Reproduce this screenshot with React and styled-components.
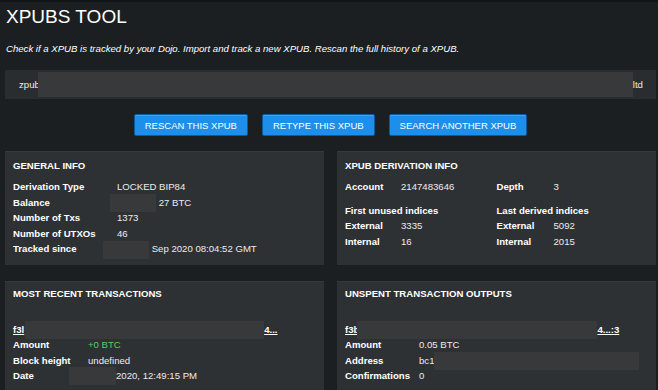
import styled, { createGlobalStyle } from 'styled-components';

const colors = {
    page: '#1c1f22',
    strip: '#121518',
    card: '#2e3134',
    cardEdge: '#373a3d',
    field: '#2a2d30',
    redact: '#38393a',
    blue: '#1d8ee9',
    blueEdge: '#0c5aa0',
    text: '#ffffff',
    value: '#ececec',
    green: '#62c95f'
}

const { page, strip, card, cardEdge, field, redact, blue, blueEdge, text, value, green } = colors;

const GlobalStyle = createGlobalStyle`
    html, body {
        margin: 0;
        background: ${page};
        overflow: hidden;
    }
    body {
        font-family: "Liberation Sans", Arial, sans-serif;
        color: ${text};
    }
`

const Page = styled.div`
    border-top: 2px solid ${strip};
    padding: 4px 2px 0 5px;
    height: 390px;
    box-sizing: border-box;
`

const Title = styled.h1`
    margin: 0 0 0 1px;
    font-size: 19px;
    line-height: 22px;
    font-weight: 400;
`

const Intro = styled.p`
    margin: 14px 0 0 1px;
    font-size: 9.6px;
    line-height: 14px;
    font-style: italic;
`

const Field = styled.div`
    margin-top: 14px;
    height: 29px;
    background: ${field};
    display: flex;
    align-items: center;
    padding-left: 14px;
    font-size: 9.6px;
    color: ${value};
`

const Redact = styled.span`
    display: inline-block;
    width: ${p => p.$w}px;
    height: ${p => p.$h || 18}px;
    margin: -2px 0 -2px ${p => p.$shift || 0}px;
    background: ${redact};
    vertical-align: middle;
`

const Actions = styled.div`
    margin-top: 15px;
    display: flex;
    justify-content: center;
    gap: 14px;
`

const Button = styled.button`
    height: 22px;
    padding: 0 10px;
    background: ${blue};
    border: 1px solid ${blueEdge};
    border-radius: 2px;
    box-shadow: inset 0 1px 0 rgba(255, 255, 255, 0.18);
    color: ${text};
    font-family: inherit;
    font-size: 9.5px;
    cursor: pointer;
`

const Grid = styled.div`
    margin-top: 15px;
    display: grid;
    grid-template-columns: 1fr 1fr;
    column-gap: 13px;
    row-gap: 16px;
`

const Card = styled.section`
    background: ${card};
    border-top: 1px solid ${cardEdge};
    padding: ${p => (p.$tight ? 5 : 7)}px 8px 8px;
    min-height: 98px;
`

const CardTitle = styled.h2`
    margin: 0;
    font-size: 9.6px;
    line-height: 14px;
    font-weight: 700;
`

const Rows = styled.div`
    margin-top: ${p => p.$gap ?? 6}px;
    display: grid;
    grid-template-columns: ${p => p.$label}px 1fr;
    font-size: 9.6px;
    line-height: ${p => p.$line || 15.6}px;
`

const Label = styled.div`
    font-weight: 700;
    white-space: nowrap;
`

const SubHead = styled(Label)`
    grid-column: 1 / -1;
`

const Value = styled.div`
    color: ${p => (p.$green ? green : value)};
    white-space: nowrap;
`

const TxLink = styled.a`
    grid-column: 1 / -1;
    color: ${text};
    font-weight: 700;
    text-decoration: underline;
    white-space: nowrap;
`

const Halves = styled.div`
    display: grid;
    grid-template-columns: 1fr 1fr;
`

const Section = styled.div`
    margin-top: ${p => p.$gap}px;
`

const Row = ({ label, children, green }) => (
    <>
        <Label>{label}</Label>
        <Value $green={green}>{children}</Value>
    </>
)

const App = () => {
    return (
        <Page>
            <GlobalStyle />
            <Title>XPUBS TOOL</Title>
            <Intro>Check if a XPUB is tracked by your Dojo. Import and track a new XPUB. Rescan the full history of a XPUB.</Intro>
            <Field>
                zpub<Redact $w={595} $h={25} $shift={-2} />ltd
            </Field>
            <Actions>
                <Button>RESCAN THIS XPUB</Button>
                <Button>RETYPE THIS XPUB</Button>
                <Button>SEARCH ANOTHER XPUB</Button>
            </Actions>
            <Grid>
                <Card>
                    <CardTitle>GENERAL INFO</CardTitle>
                    <Rows $label={104}>
                        <Row label="Derivation Type">LOCKED BIP84</Row>
                        <Row label="Balance"><Redact $w={46} $shift={-7} /> 27 BTC</Row>
                        <Row label="Number of Txs">1373</Row>
                        <Row label="Number of UTXOs">46</Row>
                        <Row label="Tracked since"><Redact $w={46} $shift={-14} /> Sep 2020 08:04:52 GMT</Row>
                    </Rows>
                </Card>
                <Card>
                    <CardTitle>XPUB DERIVATION INFO</CardTitle>
                    <Halves>
                        <Rows $label={56}>
                            <Row label="Account">2147483646</Row>
                        </Rows>
                        <Rows $label={57}>
                            <Row label="Depth">3</Row>
                        </Rows>
                    </Halves>
                    <Section $gap={8}>
                        <Halves>
                            <Rows $label={56} $gap={0}>
                                <SubHead>First unused indices</SubHead>
                                <Row label="External">3335</Row>
                                <Row label="Internal">16</Row>
                            </Rows>
                            <Rows $label={57} $gap={0}>
                                <SubHead>Last derived indices</SubHead>
                                <Row label="External">5092</Row>
                                <Row label="Internal">2015</Row>
                            </Rows>
                        </Halves>
                    </Section>
                </Card>
                <Card $tight>
                    <CardTitle>MOST RECENT TRANSACTIONS</CardTitle>
                    <Rows $label={75} $gap={21} $line={15.2}>
                        <TxLink href="#">f3l<Redact $w={239} $shift={1} />4...</TxLink>
                        <Row label="Amount" green>+0 BTC</Row>
                        <Row label="Block height">undefined</Row>
                        <Row label="Date"><Redact $w={47} $shift={-19} />2020, 12:49:15 PM</Row>
                    </Rows>
                </Card>
                <Card $tight>
                    <CardTitle>UNSPENT TRANSACTION OUTPUTS</CardTitle>
                    <Rows $label={74} $gap={21} $line={15.2}>
                        <TxLink href="#">f3b<Redact $w={240} $shift={-2} />4...:3</TxLink>
                        <Row label="Amount">0.05 BTC</Row>
                        <Row label="Address">bc1<Redact $w={205} /></Row>
                        <Row label="Confirmations">0</Row>
                    </Rows>
                </Card>
            </Grid>
        </Page>
    )
}

export default App;
